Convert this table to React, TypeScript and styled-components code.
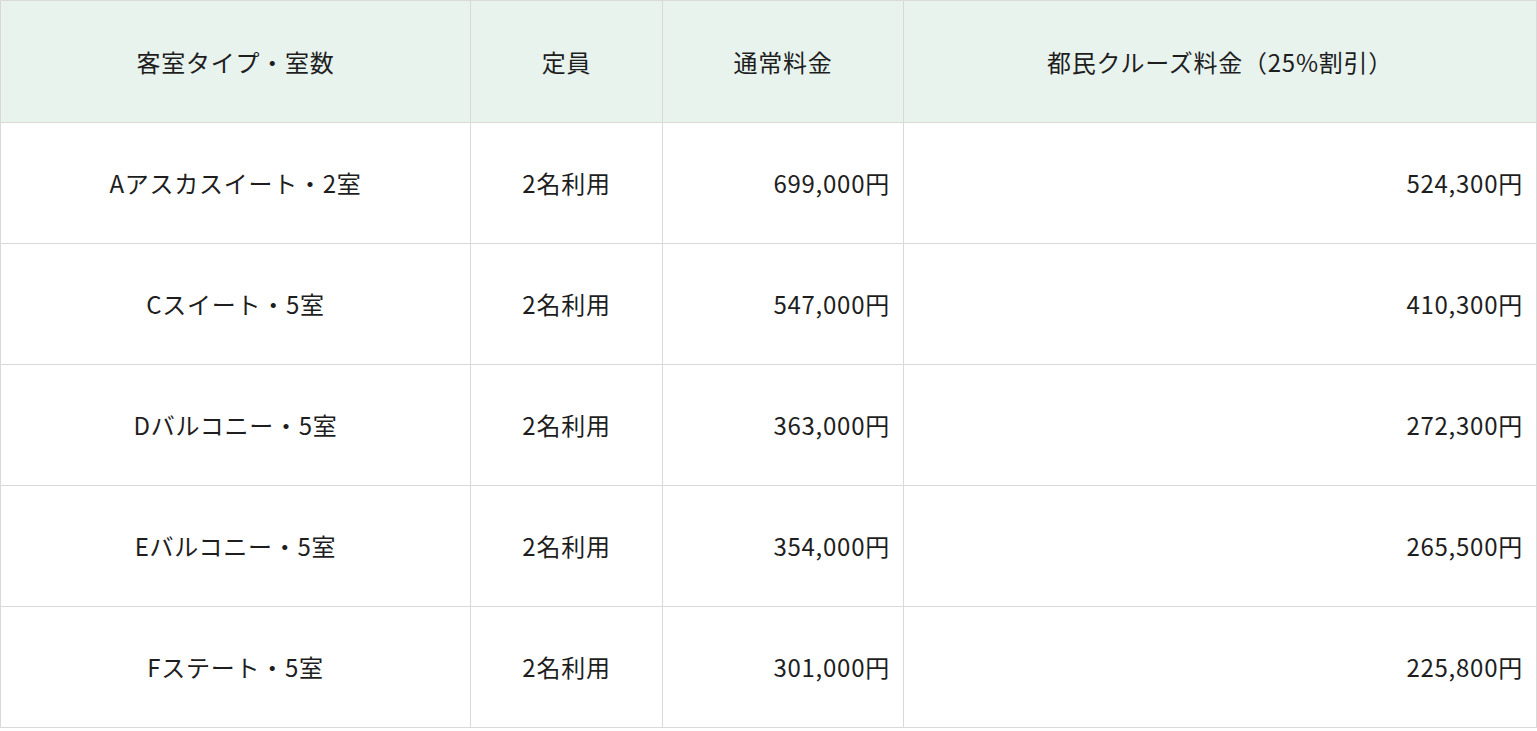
import React from "react";
import styled, { createGlobalStyle } from "styled-components";

const Global = createGlobalStyle`
  html, body { margin: 0; padding: 0; background: #ffffff; }
  body { font-family: "Noto Sans CJK JP", "Noto Sans", sans-serif; color: #1e1e1e; }
`;

const Table = styled.table`
  width: 1536px;
  border-collapse: collapse;
  table-layout: fixed;
  font-size: 24px;
  line-height: 1.4;
`;

const HeadCell = styled.th<{ $w: number }>`
  width: ${(p) => p.$w}px;
  height: 122px;
  padding: 0 13px;
  box-sizing: border-box;
  background: #e8f3ee;
  border: 1px solid #d9d9d9;
  font-weight: 400;
  text-align: center;
  vertical-align: middle;
  letter-spacing: 0.75px;
`;

const Cell = styled.td<{ $align: "center" | "right" }>`
  height: 121px;
  padding: 0 13px;
  box-sizing: border-box;
  border: 1px solid #d9d9d9;
  text-align: ${(p) => p.$align};
  vertical-align: middle;
  letter-spacing: 0.75px;
`;

const rows = [
  ["Aアスカスイート・2室", "2名利用", "699,000円", "524,300円"],
  ["Cスイート・5室", "2名利用", "547,000円", "410,300円"],
  ["Dバルコニー・5室", "2名利用", "363,000円", "272,300円"],
  ["Eバルコニー・5室", "2名利用", "354,000円", "265,500円"],
  ["Fステート・5室", "2名利用", "301,000円", "225,800円"],
];

export default function App() {
  return (
    <>
      <Global />
      <Table>
        <thead>
          <tr>
            <HeadCell $w={470}>客室タイプ・室数</HeadCell>
            <HeadCell $w={192}>定員</HeadCell>
            <HeadCell $w={241}>通常料金</HeadCell>
            <HeadCell $w={633}>都民クルーズ料金（25%割引）</HeadCell>
          </tr>
        </thead>
        <tbody>
          {rows.map((r) => (
            <tr key={r[0]}>
              <Cell $align="center">{r[0]}</Cell>
              <Cell $align="center">{r[1]}</Cell>
              <Cell $align="right">{r[2]}</Cell>
              <Cell $align="right">{r[3]}</Cell>
            </tr>
          ))}
        </tbody>
      </Table>
    </>
  );
}
